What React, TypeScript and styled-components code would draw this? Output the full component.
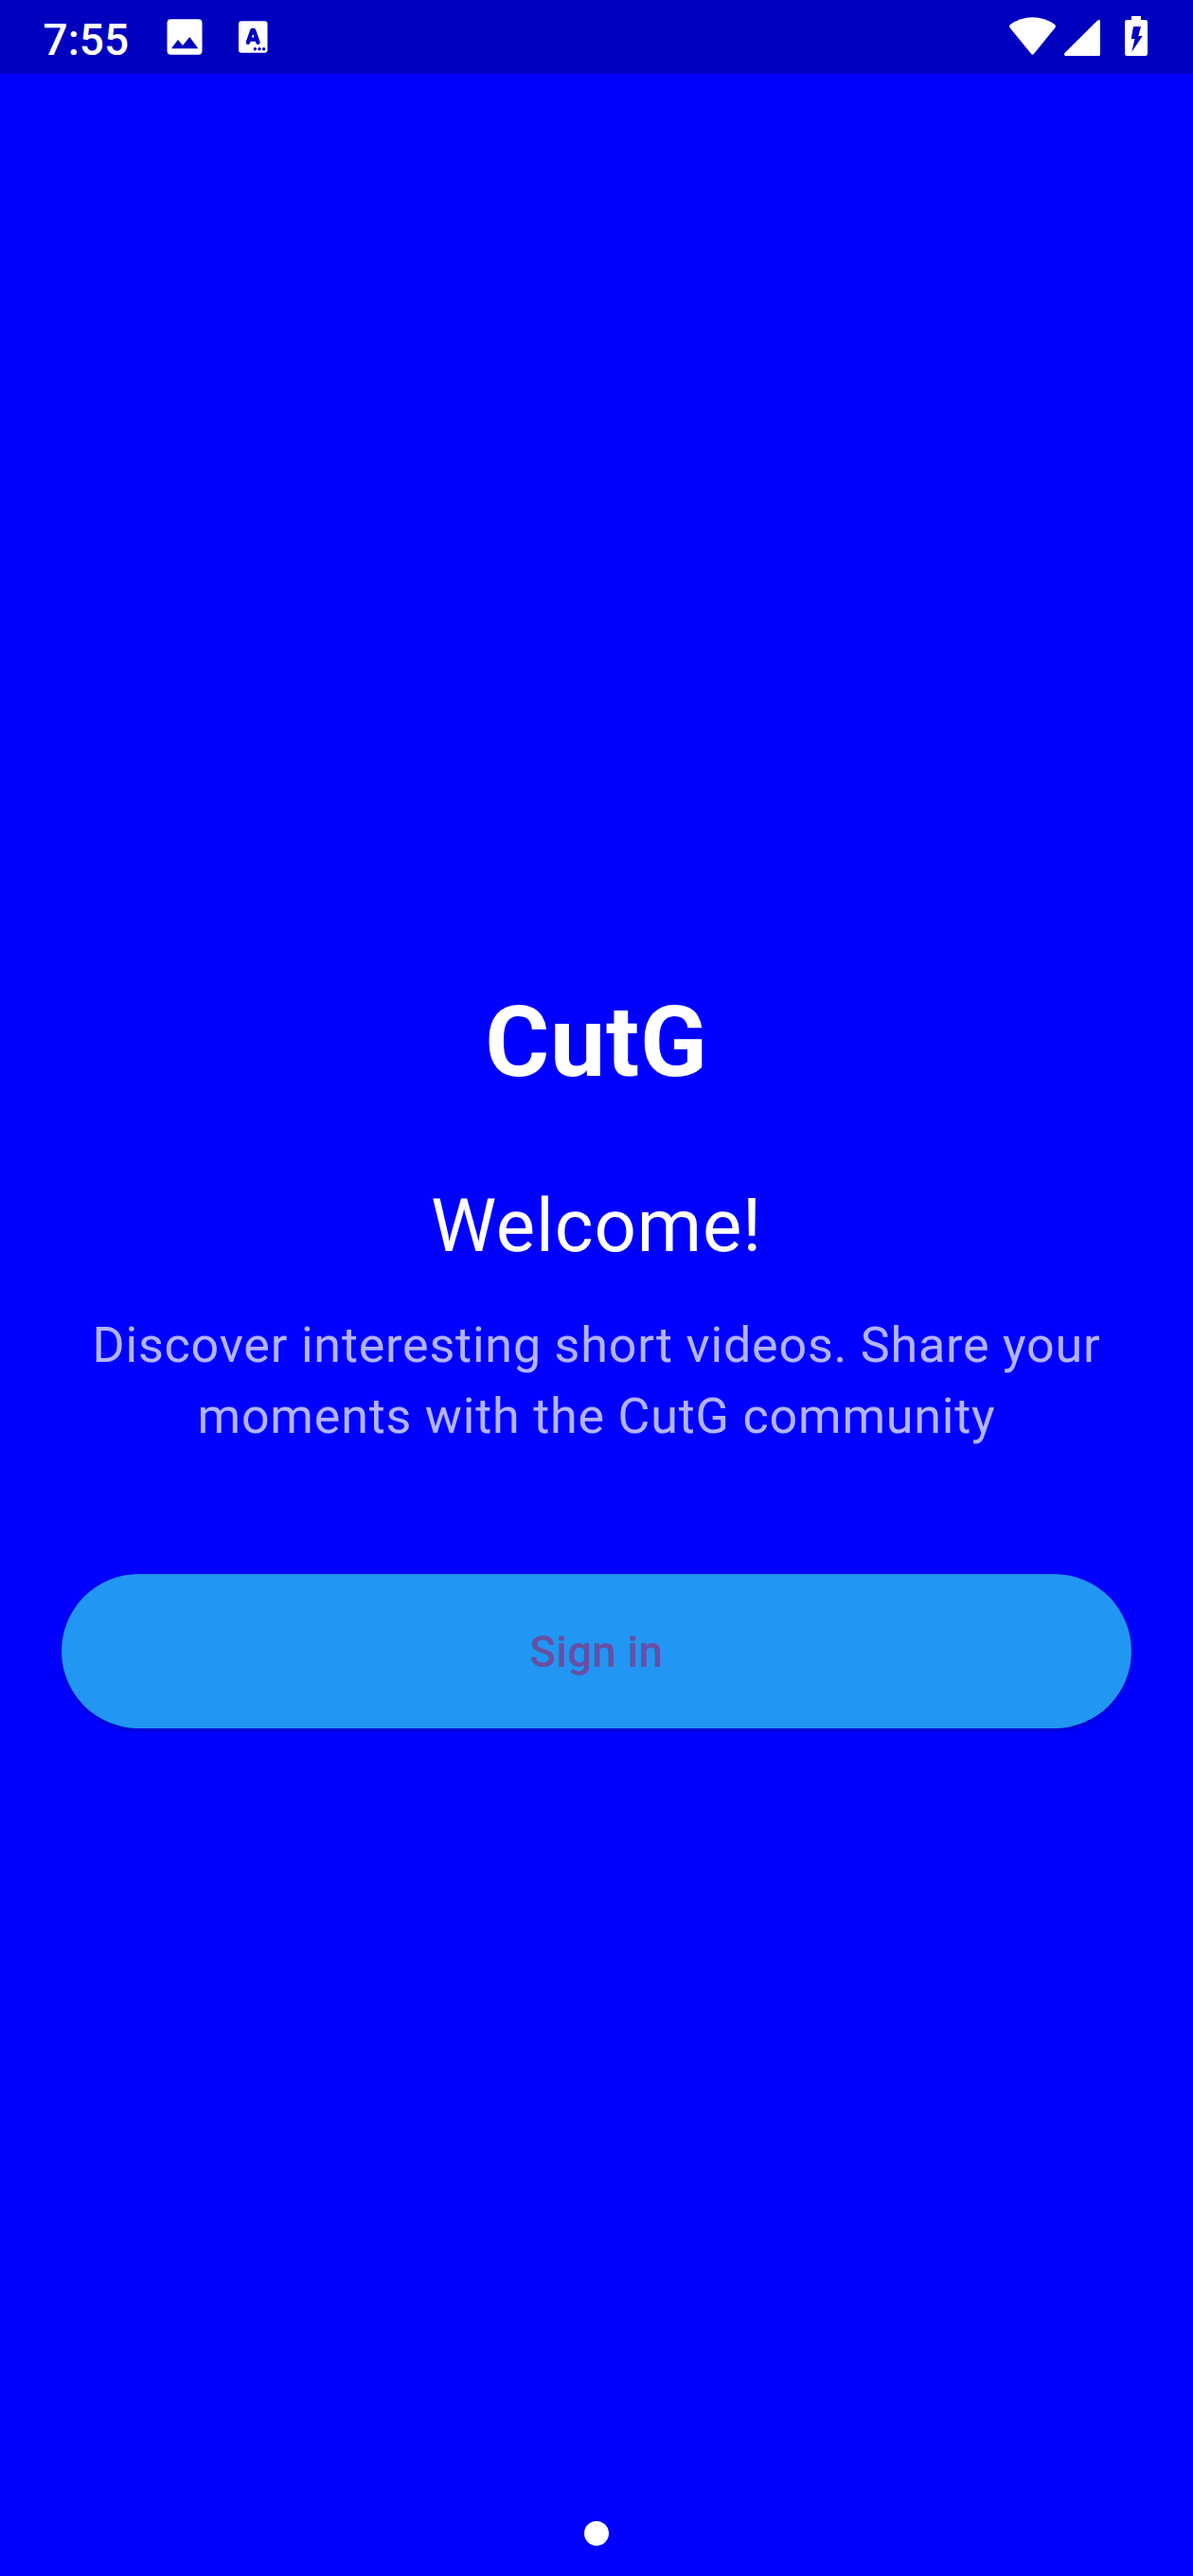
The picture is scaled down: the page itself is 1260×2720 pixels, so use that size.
import React from "react";
import styled, { createGlobalStyle } from "styled-components";

const GlobalStyle = createGlobalStyle`
  *, *::before, *::after { box-sizing: border-box; }
  html, body { margin: 0; background: #0000ff; }
  body { font-family: Roboto, sans-serif; }
`;

const Screen = styled.div`
  display: flex;
  flex-direction: column;
  width: 1260px;
  height: 2720px;
  overflow: hidden;
  background: #0000ff;
  color: #ffffff;
`;

const StatusBar = styled.header`
  display: flex;
  justify-content: space-between;
  flex: none;
  height: 78px;
  padding: 0 46px 0 45.5px;
  background: #0000bf;
`;

const StatusGroup = styled.div`
  display: flex;
  align-items: flex-start;
`;

const Clock = styled.time`
  width: 129.5px;
  padding-top: 15px;
  font-size: 46px;
  font-weight: 500;
  line-height: 54px;
`;

const Glyph = styled.svg<{ $before?: number }>`
  display: block;
  flex: none;
  margin-left: ${({ $before = 0 }) => $before}px;
`;

const Content = styled.main`
  display: flex;
  flex: 1;
  flex-direction: column;
  padding: 962px 65px 0;
  text-align: center;
`;

const Brand = styled.h1`
  margin: 0 0 81px;
  font-size: 104px;
  font-weight: 700;
  line-height: 122px;
  letter-spacing: 0.8125px;
`;

const Heading = styled.h2`
  margin: 0 0 36px;
  font-size: 78px;
  font-weight: 400;
  line-height: 104px;
  letter-spacing: 0.8125px;
`;

const Description = styled.p`
  margin: 0 0 129.25px;
  font-size: 52px;
  line-height: 75px;
  letter-spacing: 0.8125px;
  color: rgba(255, 255, 255, 0.7);
`;

const SignInButton = styled.button`
  width: 100%;
  height: 162.5px;
  padding: 2px 0 0;
  border: 0;
  border-radius: 82px;
  background: #2196f3;
  box-shadow: 0 2px 5px rgba(0, 0, 0, 0.25);
  color: #6750a4;
  font-family: inherit;
  font-size: 45.5px;
  font-weight: 500;
  line-height: 65px;
  letter-spacing: 0.325px;
`;

const Pager = styled.footer`
  display: flex;
  justify-content: center;
  flex: none;
  padding-bottom: 32.5px;
`;

const PageDot = styled.span`
  width: 26px;
  height: 26px;
  border-radius: 50%;
  background: #ffffff;
`;

function PictureIcon() {
  return (
    <Glyph width="40" height="60" viewBox="175 0 40 60">
      <rect x="176.5" y="20.3" width="37" height="37.4" rx="4" fill="#fff" />
      <path d="M181 51.2L188 42L193 48L200.3 39L209.3 51.2Z" fill="#0000bf" />
    </Glyph>
  );
}

function LetterIcon() {
  return (
    <Glyph $before={36} width="34" height="60" viewBox="251 0 34 60">
      <rect x="252" y="22.2" width="30.5" height="33.5" rx="3" fill="#fff" />
      <path
        d="M261.9 44.8L266.4 32H268L272.5 44.8M264 41.6H270.4"
        fill="none"
        stroke="#0000bf"
        strokeWidth="4.4"
        strokeLinecap="round"
        strokeLinejoin="round"
      />
      <circle cx="267.2" cy="38.2" r="1" fill="#fff" />
      <g fill="#0000bf">
        <circle cx="269.4" cy="51.8" r="1.7" />
        <circle cx="274" cy="51.8" r="1.7" />
        <circle cx="278.6" cy="51.8" r="1.7" />
      </g>
    </Glyph>
  );
}

function WifiIcon() {
  return (
    <Glyph width="52" height="60" viewBox="1065 0 52 60">
      <path
        d="M1066.6 29.2Q1065.2 27.3 1067.2 25.8Q1077.5 18.2 1090.5 18.2Q1103.5 18.2 1113.8 25.8Q1115.8 27.3 1114.4 29.2L1092 56.8Q1090.5 58.6 1089 56.8Z"
        fill="#fff"
      />
    </Glyph>
  );
}

function SignalIcon() {
  return (
    <Glyph $before={6} width="40" height="60" viewBox="1123 0 40 60">
      <path
        d="M1159.2 21.6Q1160 21 1160.8 21Q1162 21 1162 22.4V57.4Q1162 59 1160.4 59H1125.8Q1124 59 1124 57.4Q1124 56.4 1124.7 55.8Z"
        fill="#fff"
      />
    </Glyph>
  );
}

function BatteryIcon() {
  return (
    <Glyph $before={24} width="27" height="60" viewBox="1187 0 27 60">
      <path
        d="M1195 17H1205V21H1209.7Q1212 21 1212 23.3V56.7Q1212 59 1209.7 59H1190.3Q1188 59 1188 56.7V23.3Q1188 21 1190.3 21H1195Z"
        fill="#fff"
      />
      <path d="M1197 28H1205L1202.3 38H1206.7L1195.3 54.7L1198.5 41H1194.7Z" fill="#0000bf" />
    </Glyph>
  );
}

export default function App() {
  return (
    <Screen>
      <GlobalStyle />
      <StatusBar>
        <StatusGroup>
          <Clock>7:55</Clock>
          <PictureIcon />
          <LetterIcon />
        </StatusGroup>
        <StatusGroup>
          <WifiIcon />
          <SignalIcon />
          <BatteryIcon />
        </StatusGroup>
      </StatusBar>
      <Content>
        <Brand>CutG</Brand>
        <Heading>Welcome!</Heading>
        <Description>
          Discover interesting short videos. Share your
          <br />
          moments with the CutG community
        </Description>
        <SignInButton type="button">Sign in</SignInButton>
      </Content>
      <Pager>
        <PageDot />
      </Pager>
    </Screen>
  );
}
